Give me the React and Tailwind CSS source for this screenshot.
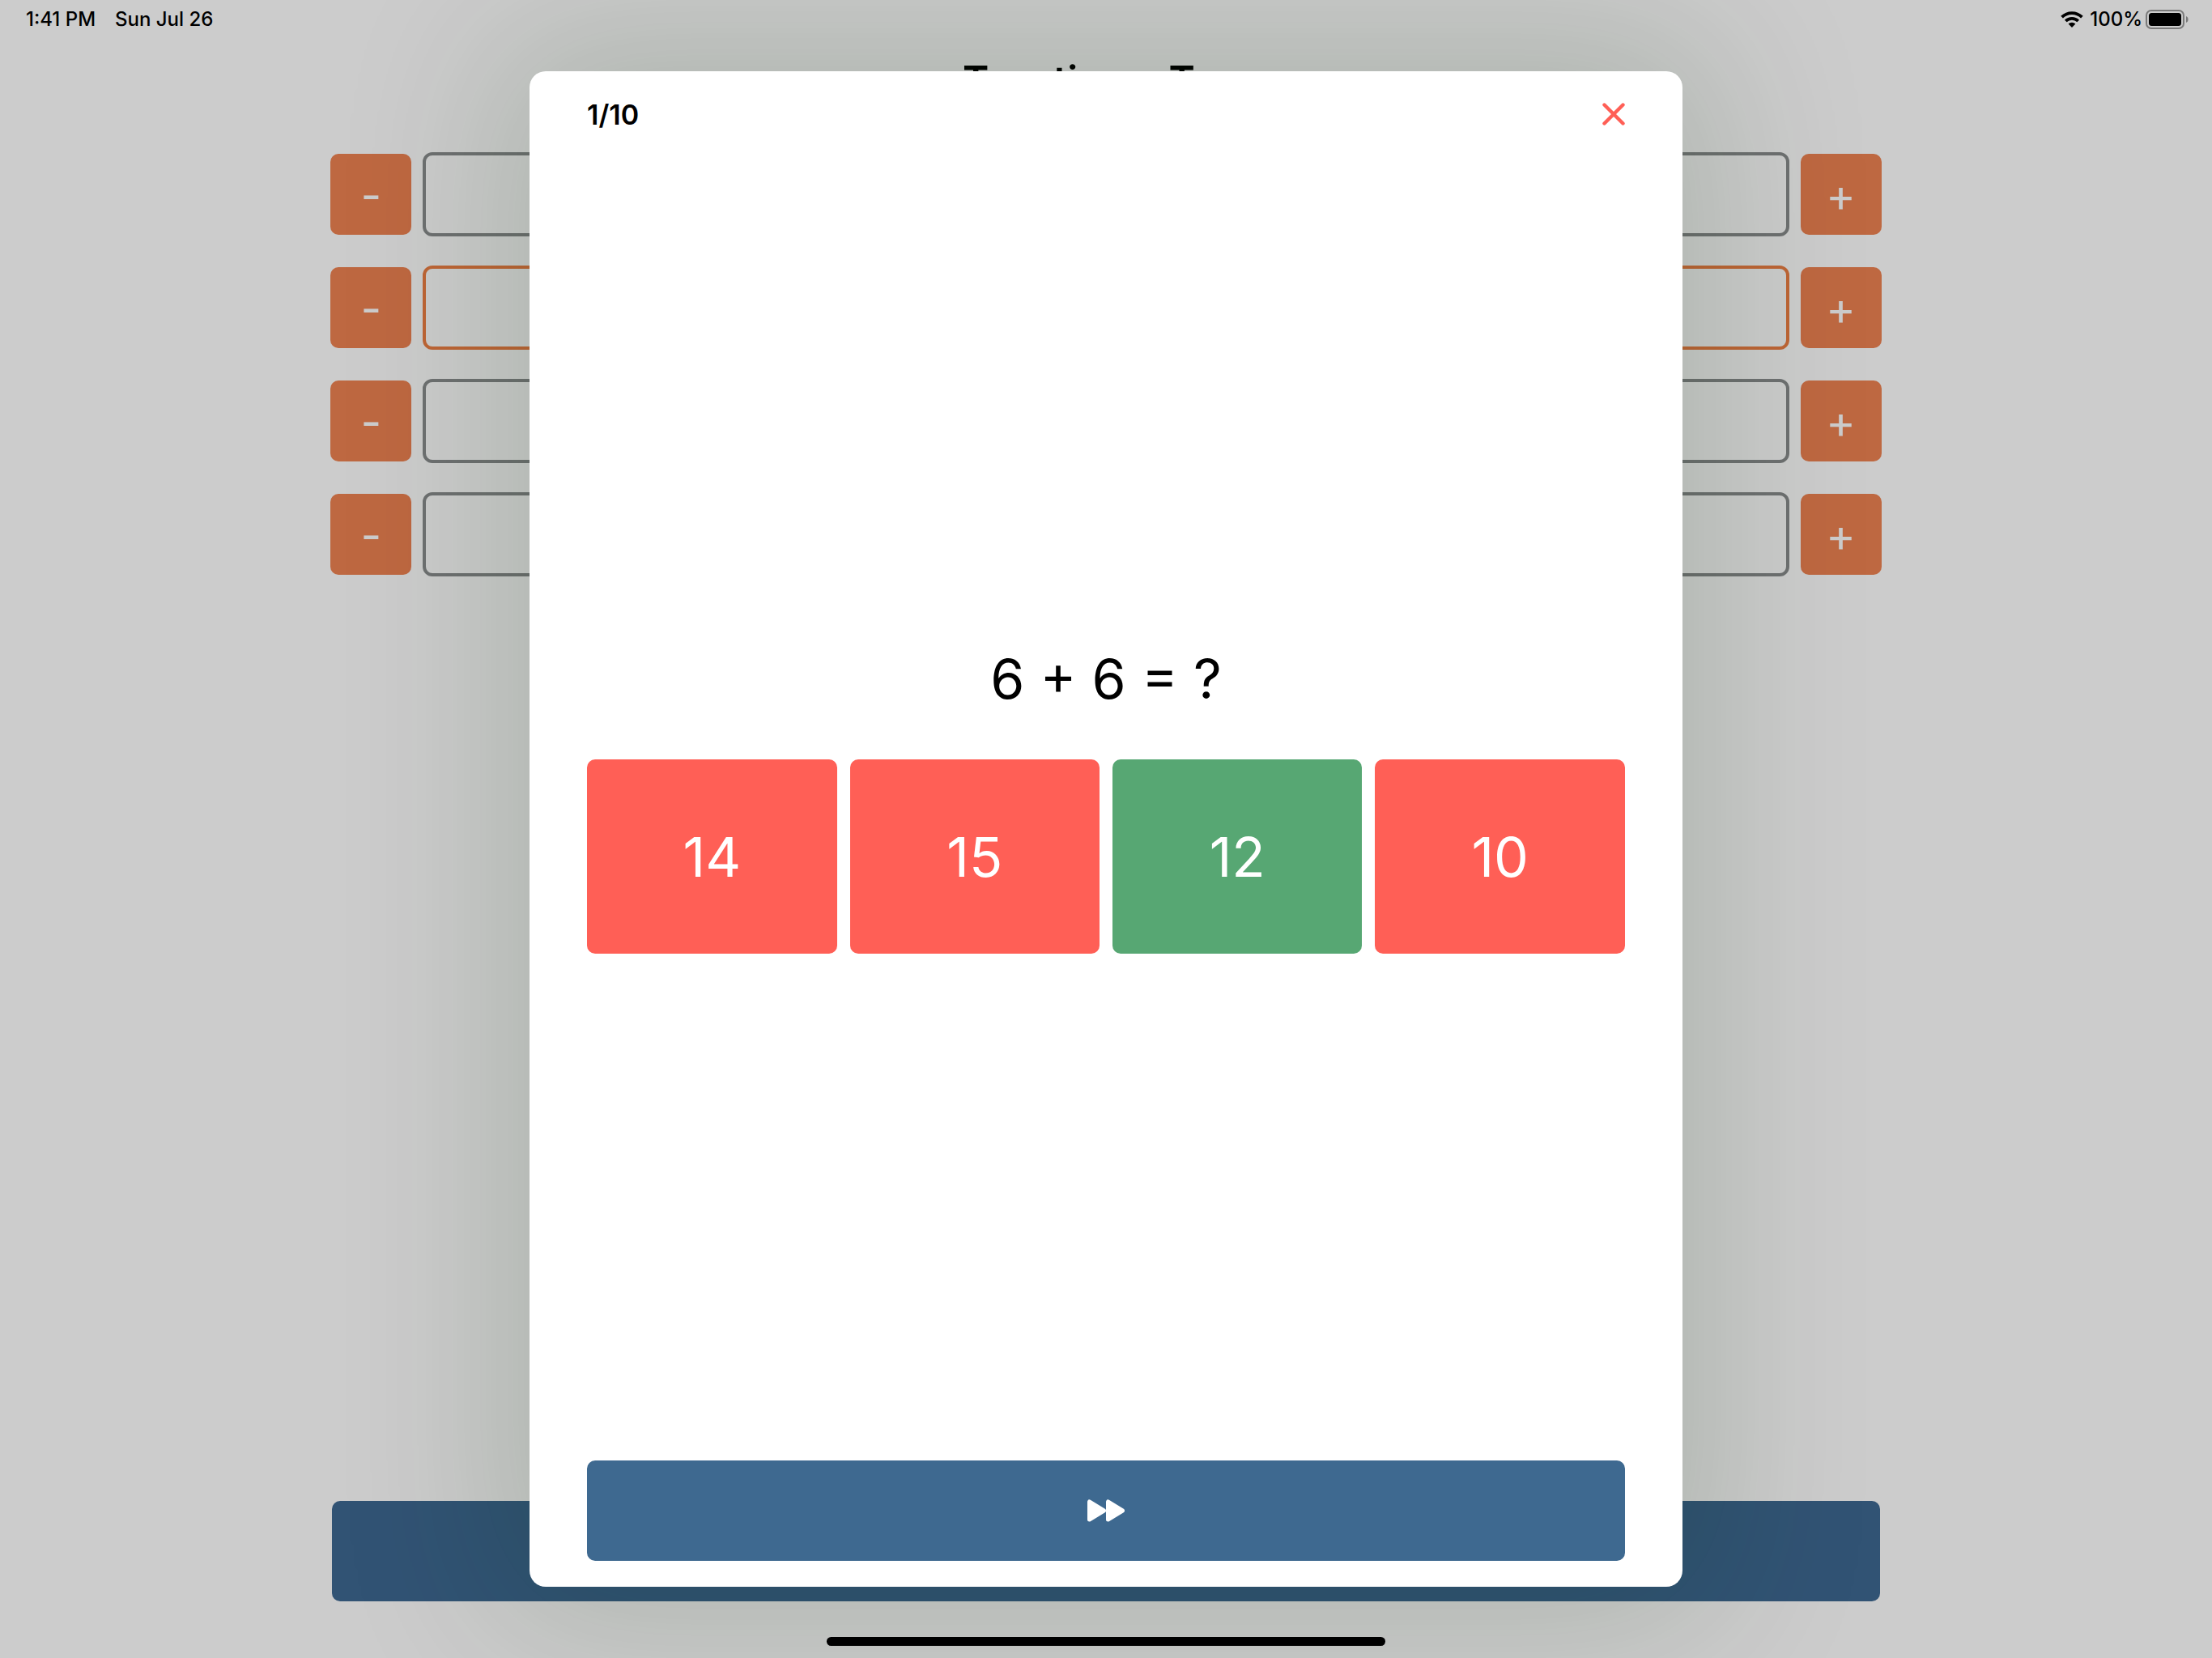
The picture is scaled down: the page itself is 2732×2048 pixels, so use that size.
import React from "react";

const rows = [
  { id: "first", label: "Number of questions", active: false },
  { id: "second", label: "Largest number", active: true },
  { id: "third", label: "Number of answers", active: false },
  { id: "fourth", label: "Number of terms", active: false },
];

const answers = [
  { value: 14, correct: false },
  { value: 15, correct: false },
  { value: 12, correct: true },
  { value: 10, correct: false },
];

function WifiIcon() {
  return (
    <svg viewBox="0 0 28 20" className="h-5 w-7" aria-hidden="true">
      <g fill="none" stroke="#000" strokeWidth="3.8">
        <path d="M1.6 7.2a17.6 17.6 0 0 1 24.8 0" />
        <path d="M6.3 12a10.9 10.9 0 0 1 15.4 0" />
      </g>
      <path d="M14 20l-4.4-4.5a6.2 6.2 0 0 1 8.8 0z" />
    </svg>
  );
}

function BatteryIcon() {
  return (
    <svg viewBox="0 0 54 24" className="h-6 w-[54px]" aria-hidden="true">
      <rect x="1" y="1" width="46" height="22" rx="6" fill="none" stroke="#7a7a7a" strokeWidth="2" />
      <rect x="4" y="4" width="40" height="16" rx="3.5" />
      <path d="M50 8c3.4 1.2 3.4 6.8 0 8z" fill="#7a7a7a" />
    </svg>
  );
}

function CloseIcon() {
  return (
    <svg viewBox="0 0 28 28" className="size-7" aria-hidden="true">
      <path d="M2.5 2.5l23 23M25.5 2.5l-23 23" fill="none" stroke="#ff5f56" strokeWidth="4.4" strokeLinecap="round" />
    </svg>
  );
}

function ForwardIcon() {
  return (
    <svg viewBox="0 0 46 28" className="h-7 w-[46px]" aria-hidden="true">
      <g fill="#fff" stroke="#fff" strokeWidth="5" strokeLinejoin="round">
        <path d="M2.5 3v22L20.5 14z" />
        <path d="M25.5 3v22L43.5 14z" />
      </g>
    </svg>
  );
}

function StatusBar() {
  return (
    <header className="flex h-12 items-center justify-between pr-7 pl-8 text-2xl font-medium">
      <div className="flex gap-6">
        <span>1:41 PM</span>
        <span>Sun Jul 26</span>
      </div>
      <div className="flex items-center gap-1">
        <WifiIcon />
        <span className="ml-1">100%</span>
        <BatteryIcon />
      </div>
    </header>
  );
}

function StepButton({ children, label }) {
  return (
    <button
      type="button"
      aria-label={label}
      className="size-[100px] rounded-[10px] bg-[#be6841] pt-0.5 text-[56px] leading-none text-[#cccccc]"
    >
      {children}
    </button>
  );
}

function SettingRow({ id, label, active }) {
  return (
    <div className="flex items-center gap-3.5">
      <StepButton label={`Decrease ${label}`}>-</StepButton>
      <input
        id={id}
        aria-label={label}
        className={`h-[104px] min-w-0 flex-1 rounded-xl border-4 bg-transparent text-center text-[40px] ${
          active ? "border-[#be6536]" : "border-[#6e7071]"
        }`}
      />
      <StepButton label={`Increase ${label}`}>+</StepButton>
    </div>
  );
}

export default function App() {
  return (
    <div className="relative flex min-h-screen flex-col bg-[#cccccc] font-['Inter','Liberation_Sans',sans-serif] text-black">
      <StatusBar />
      <main className="mx-auto flex w-[70.1%] flex-1 flex-col">
        <h1 className="mt-6 h-[116px] text-center text-[49px] leading-[56px] font-semibold">Two times Two</h1>
        <div className="flex flex-col gap-9">
          {rows.map((row) => (
            <SettingRow key={row.id} {...row} />
          ))}
        </div>
        <button type="button" aria-label="Start" className="mx-0.5 mt-auto mb-[70px] h-[124px] rounded-[10px] bg-[#315374]" />
      </main>

      <div className="absolute inset-0 flex justify-center overflow-hidden pt-[88px] pb-[88px]">
        <section
          role="dialog"
          aria-label="Quiz"
          className="flex w-[52.12%] flex-col rounded-[20px] bg-white px-[71px] pb-8 shadow-[0_0_200px_40px_rgba(8,44,6,0.15)]"
        >
          <div className="flex h-[106px] items-center justify-between">
            <span className="text-[34px] font-semibold">1/10</span>
            <button type="button" aria-label="Close">
              <CloseIcon />
            </button>
          </div>
          <div className="flex flex-1 flex-col justify-center pb-[42px]">
            <p className="mb-10 text-center text-[68px] leading-[120px]">6 + 6 = ?</p>
            <div className="grid grid-cols-4 gap-4">
              {answers.map((answer) => (
                <button
                  key={answer.value}
                  type="button"
                  className={`h-60 rounded-[10px] text-[68px] text-white ${answer.correct ? "bg-[#57a773]" : "bg-[#ff5f56]"}`}
                >
                  {answer.value}
                </button>
              ))}
            </div>
          </div>
          <button type="button" aria-label="Next question" className="flex h-[124px] items-center justify-center rounded-[10px] bg-[#3e6990]">
            <ForwardIcon />
          </button>
        </section>
      </div>
      <div className="absolute bottom-[15px] left-1/2 h-[11px] w-[690px] -translate-x-1/2 rounded-full bg-black" />
    </div>
  );
}
